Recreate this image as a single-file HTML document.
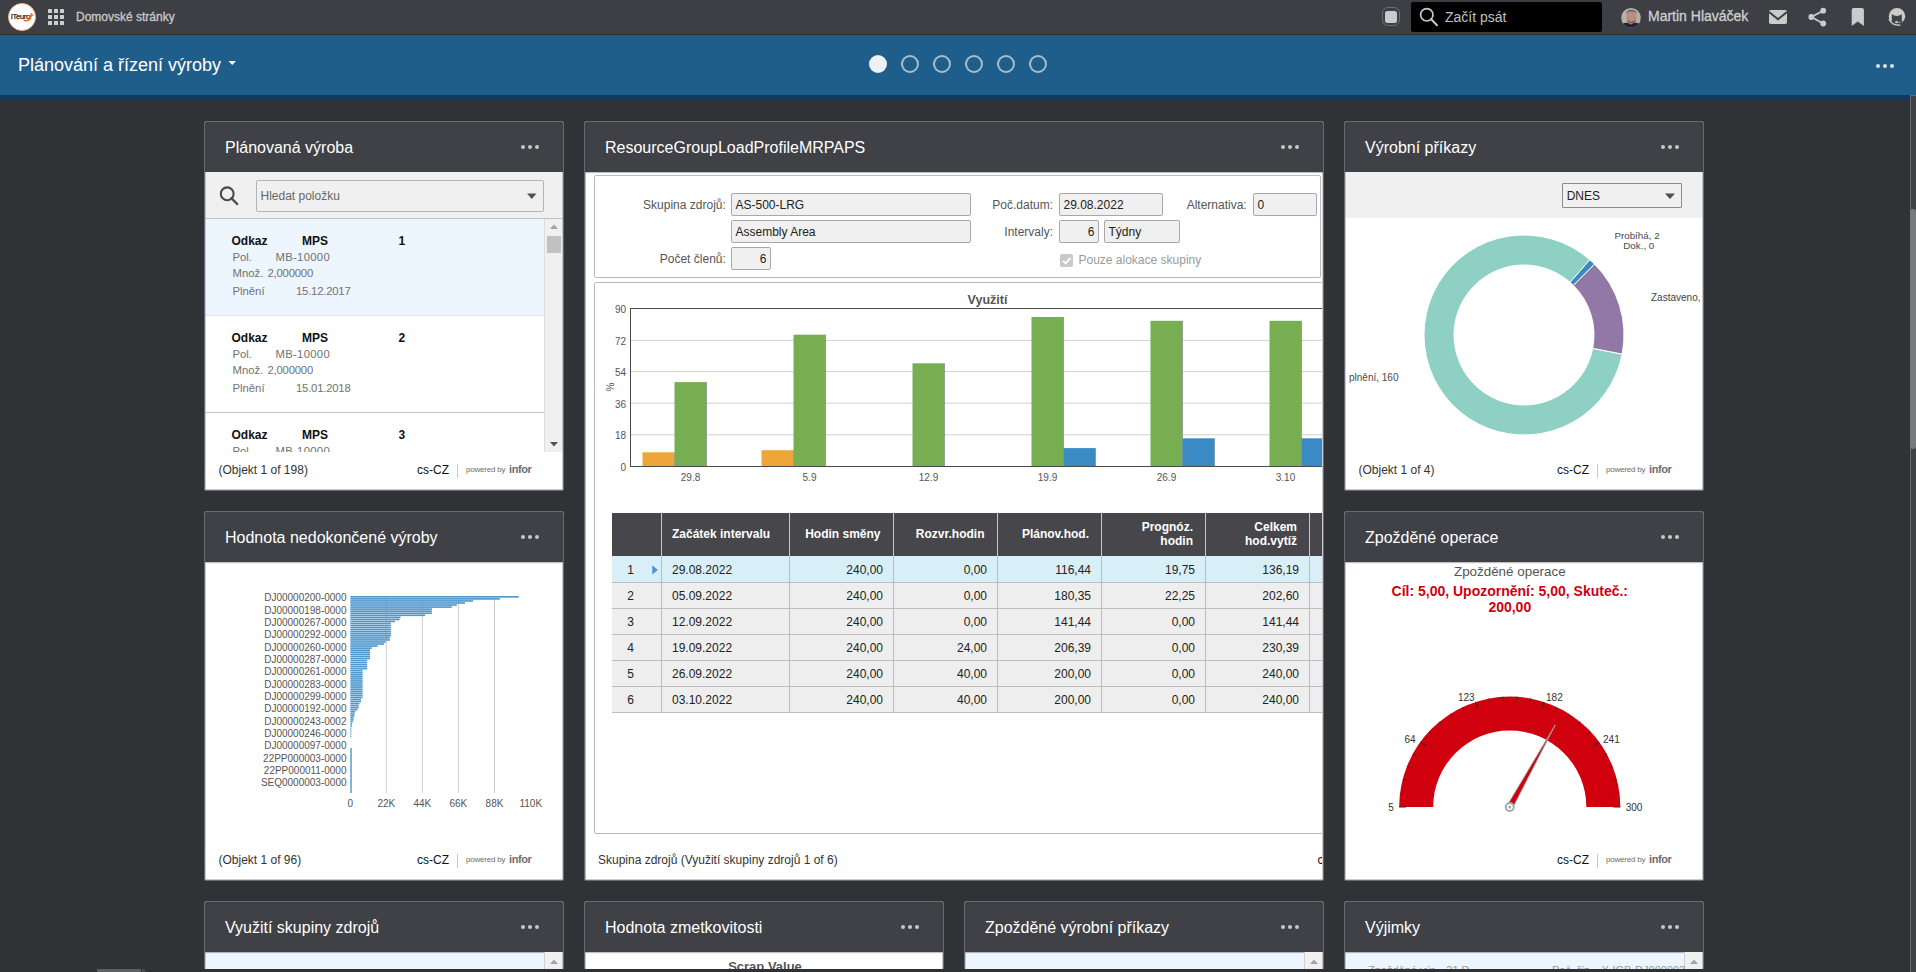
<!DOCTYPE html>
<html><head><meta charset="utf-8"><title>Plánování a řízení výroby</title>
<style>
html,body{margin:0;padding:0;}
body{width:1916px;height:972px;overflow:hidden;position:relative;background:#313236;font-family:"Liberation Sans",sans-serif;}
.a{position:absolute;}
.t{white-space:nowrap;}
svg{position:absolute;overflow:visible;}
</style></head><body>

<div class="a" style="left:0px;top:0px;width:1916px;height:34px;background:#3e3f44;"></div>
<div class="a" style="left:0px;top:34px;width:1916px;height:1px;background:#2e2f33;"></div>
<div class="a" style="left:8px;top:3px;width:26px;height:26px;border-radius:50%;background:#fff;border:1px solid #f4b48c;"></div>
<div class="a t" style="left:10.80px;top:12.87px;width:1000px;font-size:7.6px;line-height:7.6px;color:#2a2a2a;letter-spacing:-0.35px;-webkit-text-stroke:0.25px #2a2a2a;">ITeuro</div>
<svg style="left:0;top:0" width="40" height="35"><path d="M24.2 20.6 Q30 21.5 31.3 16" stroke="#f26a2a" stroke-width="1.4" fill="none" stroke-linecap="round"/><path d="M29.4 16.2 L33.4 16 L31.6 12.6 Z" fill="#f26a2a"/></svg>
<div class="a" style="left:48px;top:9px;width:4px;height:4px;background:#cfcfcf;border-radius:0.5px;"></div>
<div class="a" style="left:48px;top:15px;width:4px;height:4px;background:#cfcfcf;border-radius:0.5px;"></div>
<div class="a" style="left:48px;top:21px;width:4px;height:4px;background:#cfcfcf;border-radius:0.5px;"></div>
<div class="a" style="left:54px;top:9px;width:4px;height:4px;background:#cfcfcf;border-radius:0.5px;"></div>
<div class="a" style="left:54px;top:15px;width:4px;height:4px;background:#cfcfcf;border-radius:0.5px;"></div>
<div class="a" style="left:54px;top:21px;width:4px;height:4px;background:#cfcfcf;border-radius:0.5px;"></div>
<div class="a" style="left:60px;top:9px;width:4px;height:4px;background:#cfcfcf;border-radius:0.5px;"></div>
<div class="a" style="left:60px;top:15px;width:4px;height:4px;background:#cfcfcf;border-radius:0.5px;"></div>
<div class="a" style="left:60px;top:21px;width:4px;height:4px;background:#cfcfcf;border-radius:0.5px;"></div>
<div class="a t" style="left:76.00px;top:10.84px;width:1000px;font-size:12px;line-height:12px;color:#c9c9ca;-webkit-text-stroke:0.3px #c9c9ca;">Domovské stránky</div>
<div class="a" style="left:1382px;top:7px;width:16px;height:16.5px;border:1.5px solid #6d6d72;border-radius:6px;"></div>
<div class="a" style="left:1385px;top:11px;width:12.3px;height:12.3px;background:#cbcbcb;border-radius:2.5px;"></div>
<div class="a" style="left:1411px;top:2px;width:191px;height:30px;background:#000;border-radius:2px;"></div>
<svg style="left:1419px;top:7px" width="20" height="21"><circle cx="7.8" cy="7.8" r="6.2" stroke="#c8c8c8" stroke-width="1.7" fill="none"/><line x1="12.2" y1="12.2" x2="18" y2="18.2" stroke="#c8c8c8" stroke-width="2" stroke-linecap="round"/></svg>
<div class="a t" style="left:1445.00px;top:10.15px;width:1000px;font-size:14px;line-height:14px;color:#c0c0c0;">Začít psát</div>
<svg style="left:1621px;top:8px" width="20" height="20"><defs><clipPath id="av"><circle cx="10" cy="9.8" r="9.8"/></clipPath></defs><g clip-path="url(#av)"><rect x="0" y="0" width="20" height="20" fill="#b5b0aa"/><ellipse cx="10.5" cy="9" rx="5.2" ry="6.6" fill="#b98f7c"/><path d="M5 6 Q6 1.5 10.5 1.8 Q15 1.8 16 6 Q14 3.5 10.5 3.6 Q7 3.5 5 6 Z" fill="#6d6866"/><path d="M6.5 11.5 Q10.5 16 14.5 11.5 L14.5 14 Q10.5 17 6.5 14 Z" fill="#6b5048" opacity="0.8"/><path d="M0 20 L1.5 16 Q6 13.5 10 16.5 Q14 13.5 18.5 16 L20 20 Z" fill="#1f2430"/></g></svg>
<div class="a t" style="left:1648.00px;top:9.15px;width:1000px;font-size:14px;line-height:14px;color:#cfcfd0;-webkit-text-stroke:0.3px #cfcfd0;">Martin Hlaváček</div>
<svg style="left:1768px;top:9px" width="20" height="16"><rect x="1" y="1" width="18" height="14" rx="1.8" fill="#cbcbcb"/><path d="M1 3 L10 10.2 L19 3" stroke="#3e3f44" stroke-width="2" fill="none"/></svg>
<svg style="left:1807px;top:7px" width="22" height="20"><circle cx="16.2" cy="3.7" r="2.9" fill="#cbcbcb"/><circle cx="4.3" cy="10" r="2.9" fill="#cbcbcb"/><circle cx="16.2" cy="16.5" r="2.9" fill="#cbcbcb"/><path d="M16.2 3.7 L4.3 10 L16.2 16.5" stroke="#cbcbcb" stroke-width="1.8" fill="none"/></svg>
<svg style="left:1851px;top:8px" width="14" height="19"><path d="M0.7 2 Q0.7 0.1 2.6 0.1 H11 Q12.9 0.1 12.9 2 V18 L6.8 13.5 L0.7 18 Z" fill="#cbcbcb"/></svg>
<svg style="left:1880px;top:2px" width="32" height="30"><circle cx="17" cy="14.2" r="8.2" fill="#cbcbcb"/><path d="M11.8 12.2 Q16.8 15.8 21.8 12.2 L21.8 19.5 L25.5 19.5 L25.5 24 L8.5 24 L8.5 19.5 L11.8 19.5 Z" fill="#404146"/><path d="M9.3 17.5 Q11.5 23.2 19.8 23.3" stroke="#cbcbcb" stroke-width="1.4" fill="none" stroke-linecap="round"/><ellipse cx="16.6" cy="20.2" rx="1.6" ry="1.1" fill="#cbcbcb"/><path d="M16.6 20.4 L21.5 20.4" stroke="#9a9a9a" stroke-width="0.9"/></svg>
<div class="a" style="left:0px;top:35px;width:1916px;height:60px;background:#1f5e8b;"></div>
<div class="a" style="left:0px;top:95px;width:1916px;height:6px;background:#153957;"></div>
<div class="a t" style="left:18.00px;top:55.76px;width:1000px;font-size:18px;line-height:18px;color:#ffffff;">Plánování a řízení výroby</div>
<svg style="left:228px;top:60px" width="9" height="6"><path d="M0.5 1 L8 1 L4.25 5 Z" fill="#fff"/></svg>
<div class="a" style="left:869px;top:55px;width:18px;height:18px;border-radius:50%;background:#eef2f5;"></div>
<div class="a" style="left:901px;top:55px;width:14px;height:14px;border-radius:50%;border:2px solid #a9bdcc;"></div>
<div class="a" style="left:933px;top:55px;width:14px;height:14px;border-radius:50%;border:2px solid #a9bdcc;"></div>
<div class="a" style="left:965px;top:55px;width:14px;height:14px;border-radius:50%;border:2px solid #a9bdcc;"></div>
<div class="a" style="left:997px;top:55px;width:14px;height:14px;border-radius:50%;border:2px solid #a9bdcc;"></div>
<div class="a" style="left:1029px;top:55px;width:14px;height:14px;border-radius:50%;border:2px solid #a9bdcc;"></div>
<div class="a" style="left:1876px;top:64px;width:4px;height:4px;background:#d8e2ea;border-radius:50%;"></div>
<div class="a" style="left:1883px;top:64px;width:4px;height:4px;background:#d8e2ea;border-radius:50%;"></div>
<div class="a" style="left:1890px;top:64px;width:4px;height:4px;background:#d8e2ea;border-radius:50%;"></div>
<div class="a" style="left:1910px;top:95px;width:6px;height:877px;background:#414045;"></div>
<div class="a" style="left:1910px;top:95px;width:1px;height:877px;background:#69696e;"></div>
<div class="a" style="left:1910px;top:95px;width:6px;height:1px;background:#69696e;"></div>
<div class="a" style="left:1910px;top:209px;width:6px;height:240px;background:#7a797e;border-radius:3px;"></div>
<div class="a" style="left:204px;top:121px;width:358px;height:368px;border:1px solid #676a73;border-radius:2px;background:#fff;overflow:hidden;">
<div class="a" style="left:0;top:0;width:358px;height:50px;background:#404146;box-shadow:0 1px 1px rgba(0,0,0,0.25);"></div>
</div>
<div class="a t" style="left:225.00px;top:140.46px;width:1000px;font-size:16px;line-height:16px;color:#ffffff;">Plánovaná výroba</div>
<div class="a" style="left:521px;top:145px;width:4px;height:4px;background:#c8c8ca;border-radius:50%;"></div>
<div class="a" style="left:528px;top:145px;width:4px;height:4px;background:#c8c8ca;border-radius:50%;"></div>
<div class="a" style="left:535px;top:145px;width:4px;height:4px;background:#c8c8ca;border-radius:50%;"></div>
<div class="a" style="left:205px;top:172px;width:358px;height:46px;background:#f0f0f0;"></div>
<div class="a" style="left:205px;top:218px;width:358px;height:1px;background:#c2c2c2;"></div>
<svg style="left:218px;top:186px" width="22" height="22"><circle cx="9.2" cy="7.8" r="6.4" stroke="#4a4a4a" stroke-width="2.1" fill="none"/><line x1="13.6" y1="12.4" x2="19.2" y2="18" stroke="#4a4a4a" stroke-width="2.3" stroke-linecap="round"/></svg>
<div class="a" style="left:256px;top:180px;width:286px;height:30px;border:1px solid #b4b4b4;border-radius:2px;background:#f0f0f0;"></div>
<div class="a t" style="left:260.50px;top:189.84px;width:1000px;font-size:12px;line-height:12px;color:#666;">Hledat položku</div>
<svg style="left:527px;top:193px" width="10" height="7"><path d="M0 0.5 L9.5 0.5 L4.75 6 Z" fill="#505050"/></svg>
<div class="a" style="left:205px;top:219px;width:340px;height:97px;background:#edf5fe;"></div>
<div class="a" style="left:205px;top:315px;width:340px;height:1px;background:#d8e3ee;"></div>
<div class="a" style="left:205px;top:412px;width:340px;height:1px;background:#c4c4c4;"></div>
<div class="a t" style="left:231.50px;top:234.84px;width:1000px;font-size:12px;line-height:12px;color:#111;font-weight:bold;">Odkaz</div>
<div class="a t" style="left:302.00px;top:234.84px;width:1000px;font-size:12px;line-height:12px;color:#111;font-weight:bold;">MPS</div>
<div class="a t" style="left:398.50px;top:234.84px;width:1000px;font-size:12px;line-height:12px;color:#111;font-weight:bold;">1</div>
<div class="a t" style="left:232.50px;top:252.43px;width:1000px;font-size:11.3px;line-height:11.3px;color:#727272;">Pol.</div>
<div class="a t" style="left:275.50px;top:252.43px;width:1000px;font-size:11.3px;line-height:11.3px;color:#727272;letter-spacing:0.3px;">MB-10000</div>
<div class="a t" style="left:232.50px;top:268.43px;width:1000px;font-size:11.3px;line-height:11.3px;color:#727272;">Množ.</div>
<div class="a t" style="left:267.50px;top:268.43px;width:1000px;font-size:11.3px;line-height:11.3px;color:#727272;letter-spacing:-0.2px;">2,000000</div>
<div class="a t" style="left:232.50px;top:286.43px;width:1000px;font-size:11.3px;line-height:11.3px;color:#727272;">Plnění</div>
<div class="a t" style="left:296.00px;top:286.43px;width:1000px;font-size:11.3px;line-height:11.3px;color:#727272;letter-spacing:-0.2px;">15.12.2017</div>
<div class="a t" style="left:231.50px;top:331.84px;width:1000px;font-size:12px;line-height:12px;color:#111;font-weight:bold;">Odkaz</div>
<div class="a t" style="left:302.00px;top:331.84px;width:1000px;font-size:12px;line-height:12px;color:#111;font-weight:bold;">MPS</div>
<div class="a t" style="left:398.50px;top:331.84px;width:1000px;font-size:12px;line-height:12px;color:#111;font-weight:bold;">2</div>
<div class="a t" style="left:232.50px;top:349.43px;width:1000px;font-size:11.3px;line-height:11.3px;color:#727272;">Pol.</div>
<div class="a t" style="left:275.50px;top:349.43px;width:1000px;font-size:11.3px;line-height:11.3px;color:#727272;letter-spacing:0.3px;">MB-10000</div>
<div class="a t" style="left:232.50px;top:365.43px;width:1000px;font-size:11.3px;line-height:11.3px;color:#727272;">Množ.</div>
<div class="a t" style="left:267.50px;top:365.43px;width:1000px;font-size:11.3px;line-height:11.3px;color:#727272;letter-spacing:-0.2px;">2,000000</div>
<div class="a t" style="left:232.50px;top:383.43px;width:1000px;font-size:11.3px;line-height:11.3px;color:#727272;">Plnění</div>
<div class="a t" style="left:296.00px;top:383.43px;width:1000px;font-size:11.3px;line-height:11.3px;color:#727272;letter-spacing:-0.2px;">15.01.2018</div>
<div class="a t" style="left:231.50px;top:428.84px;width:1000px;font-size:12px;line-height:12px;color:#111;font-weight:bold;">Odkaz</div>
<div class="a t" style="left:302.00px;top:428.84px;width:1000px;font-size:12px;line-height:12px;color:#111;font-weight:bold;">MPS</div>
<div class="a t" style="left:398.50px;top:428.84px;width:1000px;font-size:12px;line-height:12px;color:#111;font-weight:bold;">3</div>
<div class="a t" style="left:232.50px;top:446.43px;width:1000px;font-size:11.3px;line-height:11.3px;color:#727272;">Pol.</div>
<div class="a t" style="left:275.50px;top:446.43px;width:1000px;font-size:11.3px;line-height:11.3px;color:#727272;letter-spacing:0.3px;">MB-10000</div>
<div class="a" style="left:205px;top:452px;width:358px;height:37px;background:#fff;"></div>
<div class="a" style="left:545px;top:219px;width:18px;height:233px;background:#f0f0f0;"></div>
<svg style="left:545px;top:219px" width="18" height="233"><path d="M5 10 L13 10 L9 5.5 Z" fill="#a3a3a3"/><path d="M5 223 L13 223 L9 227.5 Z" fill="#505050"/></svg>
<div class="a" style="left:547px;top:236px;width:14px;height:17px;background:#c1c1c1;"></div>
<div class="a" style="left:544px;top:219px;width:1px;height:233px;background:#dcdcdc;"></div>
<div class="a t" style="left:218.50px;top:463.84px;width:1000px;font-size:12px;line-height:12px;color:#333;">(Objekt 1 of 198)</div>
<div class="a t" style="left:417.00px;top:463.84px;width:1000px;font-size:12px;line-height:12px;color:#111;">cs-CZ</div>
<div class="a" style="left:457px;top:464px;width:1px;height:14px;background:#c8c8c8;"></div>
<div class="a t" style="left:466.00px;top:466.23px;width:1000px;font-size:8px;line-height:8px;color:#6d6d6d;letter-spacing:-0.2px;">powered by</div>
<div class="a t" style="left:509.00px;top:463.69px;width:1000px;font-size:11px;line-height:11px;color:#6d6d6d;font-weight:bold;letter-spacing:-0.4px;">infor</div>
<div class="a" style="left:204px;top:511px;width:358px;height:368px;border:1px solid #676a73;border-radius:2px;background:#fff;overflow:hidden;">
<div class="a" style="left:0;top:0;width:358px;height:50px;background:#404146;box-shadow:0 1px 1px rgba(0,0,0,0.25);"></div>
</div>
<div class="a t" style="left:225.00px;top:530.46px;width:1000px;font-size:16px;line-height:16px;color:#ffffff;">Hodnota nedokončené výroby</div>
<div class="a" style="left:521px;top:535px;width:4px;height:4px;background:#c8c8ca;border-radius:50%;"></div>
<div class="a" style="left:528px;top:535px;width:4px;height:4px;background:#c8c8ca;border-radius:50%;"></div>
<div class="a" style="left:535px;top:535px;width:4px;height:4px;background:#c8c8ca;border-radius:50%;"></div>
<div class="a t" style="left:-653.50px;top:593.43px;width:1000px;font-size:10px;line-height:10px;color:#555;text-align:right;">DJ00000200-0000</div>
<div class="a t" style="left:-653.50px;top:605.75px;width:1000px;font-size:10px;line-height:10px;color:#555;text-align:right;">DJ00000198-0000</div>
<div class="a t" style="left:-653.50px;top:618.07px;width:1000px;font-size:10px;line-height:10px;color:#555;text-align:right;">DJ00000267-0000</div>
<div class="a t" style="left:-653.50px;top:630.39px;width:1000px;font-size:10px;line-height:10px;color:#555;text-align:right;">DJ00000292-0000</div>
<div class="a t" style="left:-653.50px;top:642.71px;width:1000px;font-size:10px;line-height:10px;color:#555;text-align:right;">DJ00000260-0000</div>
<div class="a t" style="left:-653.50px;top:655.03px;width:1000px;font-size:10px;line-height:10px;color:#555;text-align:right;">DJ00000287-0000</div>
<div class="a t" style="left:-653.50px;top:667.35px;width:1000px;font-size:10px;line-height:10px;color:#555;text-align:right;">DJ00000261-0000</div>
<div class="a t" style="left:-653.50px;top:679.67px;width:1000px;font-size:10px;line-height:10px;color:#555;text-align:right;">DJ00000283-0000</div>
<div class="a t" style="left:-653.50px;top:692.00px;width:1000px;font-size:10px;line-height:10px;color:#555;text-align:right;">DJ00000299-0000</div>
<div class="a t" style="left:-653.50px;top:704.31px;width:1000px;font-size:10px;line-height:10px;color:#555;text-align:right;">DJ00000192-0000</div>
<div class="a t" style="left:-653.50px;top:716.63px;width:1000px;font-size:10px;line-height:10px;color:#555;text-align:right;">DJ00000243-0002</div>
<div class="a t" style="left:-653.50px;top:728.95px;width:1000px;font-size:10px;line-height:10px;color:#555;text-align:right;">DJ00000246-0000</div>
<div class="a t" style="left:-653.50px;top:741.27px;width:1000px;font-size:10px;line-height:10px;color:#555;text-align:right;">DJ00000097-0000</div>
<div class="a t" style="left:-653.50px;top:753.59px;width:1000px;font-size:10px;line-height:10px;color:#555;text-align:right;">22PP000003-0000</div>
<div class="a t" style="left:-653.50px;top:765.91px;width:1000px;font-size:10px;line-height:10px;color:#555;text-align:right;">22PP000011-0000</div>
<div class="a t" style="left:-653.50px;top:778.24px;width:1000px;font-size:10px;line-height:10px;color:#555;text-align:right;">SEQ0000003-0000</div>
<svg style="left:0;top:0" width="600" height="972"><line x1="386.3" y1="596" x2="386.3" y2="793" stroke="#cfcfcf" stroke-width="1"/><line x1="422.4" y1="596" x2="422.4" y2="793" stroke="#cfcfcf" stroke-width="1"/><line x1="458.4" y1="596" x2="458.4" y2="793" stroke="#cfcfcf" stroke-width="1"/><line x1="494.5" y1="596" x2="494.5" y2="793" stroke="#cfcfcf" stroke-width="1"/><rect x="350.4" y="596.00" width="168.40" height="1.64" fill="#4f97cd"/><rect x="350.4" y="598.05" width="149.50" height="1.64" fill="#4f97cd"/><rect x="350.4" y="600.10" width="122.60" height="1.64" fill="#4f97cd"/><rect x="350.4" y="602.16" width="114.60" height="1.64" fill="#4f97cd"/><rect x="350.4" y="604.21" width="106.40" height="1.64" fill="#4f97cd"/><rect x="350.4" y="606.26" width="101.40" height="1.64" fill="#4f97cd"/><rect x="350.4" y="608.31" width="81.50" height="1.64" fill="#4f97cd"/><rect x="350.4" y="610.36" width="81.50" height="1.64" fill="#4f97cd"/><rect x="350.4" y="612.42" width="81.50" height="1.64" fill="#4f97cd"/><rect x="350.4" y="614.47" width="74.70" height="1.64" fill="#4f97cd"/><rect x="350.4" y="616.52" width="50.10" height="1.64" fill="#4f97cd"/><rect x="350.4" y="618.57" width="49.20" height="1.64" fill="#4f97cd"/><rect x="350.4" y="620.62" width="44.50" height="1.64" fill="#4f97cd"/><rect x="350.4" y="622.68" width="40.50" height="1.64" fill="#4f97cd"/><rect x="350.4" y="624.73" width="40.50" height="1.64" fill="#4f97cd"/><rect x="350.4" y="626.78" width="40.50" height="1.64" fill="#4f97cd"/><rect x="350.4" y="628.83" width="40.50" height="1.64" fill="#4f97cd"/><rect x="350.4" y="630.89" width="40.50" height="1.64" fill="#4f97cd"/><rect x="350.4" y="632.94" width="40.50" height="1.64" fill="#4f97cd"/><rect x="350.4" y="634.99" width="40.50" height="1.64" fill="#4f97cd"/><rect x="350.4" y="637.04" width="39.40" height="1.64" fill="#4f97cd"/><rect x="350.4" y="639.09" width="39.40" height="1.64" fill="#4f97cd"/><rect x="350.4" y="641.15" width="35.40" height="1.64" fill="#4f97cd"/><rect x="350.4" y="643.20" width="33.70" height="1.64" fill="#4f97cd"/><rect x="350.4" y="645.25" width="27.20" height="1.64" fill="#4f97cd"/><rect x="350.4" y="647.30" width="21.30" height="1.64" fill="#4f97cd"/><rect x="350.4" y="649.35" width="19.60" height="1.64" fill="#4f97cd"/><rect x="350.4" y="651.41" width="19.60" height="1.64" fill="#4f97cd"/><rect x="350.4" y="653.46" width="19.60" height="1.64" fill="#4f97cd"/><rect x="350.4" y="655.51" width="19.60" height="1.64" fill="#4f97cd"/><rect x="350.4" y="657.56" width="19.60" height="1.64" fill="#4f97cd"/><rect x="350.4" y="659.61" width="16.80" height="1.64" fill="#4f97cd"/><rect x="350.4" y="661.67" width="16.80" height="1.64" fill="#4f97cd"/><rect x="350.4" y="663.72" width="16.80" height="1.64" fill="#4f97cd"/><rect x="350.4" y="665.77" width="16.80" height="1.64" fill="#4f97cd"/><rect x="350.4" y="667.82" width="16.80" height="1.64" fill="#4f97cd"/><rect x="350.4" y="669.88" width="12.20" height="1.64" fill="#4f97cd"/><rect x="350.4" y="671.93" width="12.20" height="1.64" fill="#4f97cd"/><rect x="350.4" y="673.98" width="12.20" height="1.64" fill="#4f97cd"/><rect x="350.4" y="676.03" width="12.20" height="1.64" fill="#4f97cd"/><rect x="350.4" y="678.08" width="12.20" height="1.64" fill="#4f97cd"/><rect x="350.4" y="680.14" width="12.20" height="1.64" fill="#4f97cd"/><rect x="350.4" y="682.19" width="12.20" height="1.64" fill="#4f97cd"/><rect x="350.4" y="684.24" width="12.20" height="1.64" fill="#4f97cd"/><rect x="350.4" y="686.29" width="12.20" height="1.64" fill="#4f97cd"/><rect x="350.4" y="688.34" width="12.20" height="1.64" fill="#4f97cd"/><rect x="350.4" y="690.40" width="12.20" height="1.64" fill="#4f97cd"/><rect x="350.4" y="692.45" width="12.20" height="1.64" fill="#4f97cd"/><rect x="350.4" y="694.50" width="12.20" height="1.64" fill="#4f97cd"/><rect x="350.4" y="696.55" width="12.20" height="1.64" fill="#4f97cd"/><rect x="350.4" y="698.60" width="10.60" height="1.64" fill="#4f97cd"/><rect x="350.4" y="700.66" width="10.60" height="1.64" fill="#4f97cd"/><rect x="350.4" y="702.71" width="9.10" height="1.64" fill="#4f97cd"/><rect x="350.4" y="704.76" width="8.30" height="1.64" fill="#4f97cd"/><rect x="350.4" y="706.81" width="8.30" height="1.64" fill="#4f97cd"/><rect x="350.4" y="708.86" width="7.10" height="1.64" fill="#4f97cd"/><rect x="350.4" y="710.92" width="4.90" height="1.64" fill="#4f97cd"/><rect x="350.4" y="712.97" width="4.10" height="1.64" fill="#4f97cd"/><rect x="350.4" y="715.02" width="4.10" height="1.64" fill="#4f97cd"/><rect x="350.4" y="717.07" width="3.20" height="1.64" fill="#4f97cd"/><rect x="350.4" y="719.12" width="3.20" height="1.64" fill="#4f97cd"/><rect x="350.4" y="721.18" width="2.30" height="1.64" fill="#4f97cd"/><rect x="350.4" y="723.23" width="1.50" height="1.64" fill="#4f97cd"/><rect x="350.4" y="725.28" width="1.50" height="1.64" fill="#4f97cd"/><rect x="350.4" y="727.33" width="0.90" height="1.64" fill="#4f97cd"/><rect x="350.4" y="729.39" width="0.90" height="1.64" fill="#4f97cd"/><rect x="350.4" y="731.44" width="0.90" height="1.64" fill="#4f97cd"/><rect x="350.4" y="733.49" width="0.90" height="1.64" fill="#4f97cd"/><rect x="350.4" y="735.54" width="0.90" height="1.64" fill="#4f97cd"/><rect x="350.3" y="748" width="1.5" height="45" fill="#5a9dd0"/></svg>
<div class="a t" style="left:-149.70px;top:798.83px;width:1000px;font-size:10px;line-height:10px;color:#555;text-align:center;">0</div>
<div class="a t" style="left:-113.70px;top:798.83px;width:1000px;font-size:10px;line-height:10px;color:#555;text-align:center;">22K</div>
<div class="a t" style="left:-77.60px;top:798.83px;width:1000px;font-size:10px;line-height:10px;color:#555;text-align:center;">44K</div>
<div class="a t" style="left:-41.60px;top:798.83px;width:1000px;font-size:10px;line-height:10px;color:#555;text-align:center;">66K</div>
<div class="a t" style="left:-5.50px;top:798.83px;width:1000px;font-size:10px;line-height:10px;color:#555;text-align:center;">88K</div>
<div class="a t" style="left:30.80px;top:798.83px;width:1000px;font-size:10px;line-height:10px;color:#555;text-align:center;">110K</div>
<div class="a t" style="left:218.50px;top:853.84px;width:1000px;font-size:12px;line-height:12px;color:#333;">(Objekt 1 of 96)</div>
<div class="a t" style="left:417.00px;top:853.84px;width:1000px;font-size:12px;line-height:12px;color:#111;">cs-CZ</div>
<div class="a" style="left:457px;top:854px;width:1px;height:14px;background:#c8c8c8;"></div>
<div class="a t" style="left:466.00px;top:856.23px;width:1000px;font-size:8px;line-height:8px;color:#6d6d6d;letter-spacing:-0.2px;">powered by</div>
<div class="a t" style="left:509.00px;top:853.69px;width:1000px;font-size:11px;line-height:11px;color:#6d6d6d;font-weight:bold;letter-spacing:-0.4px;">infor</div>
<div class="a" style="left:584px;top:121px;width:738px;height:758px;border:1px solid #676a73;border-radius:2px;background:#fff;overflow:hidden;">
<div class="a" style="left:0;top:0;width:738px;height:50px;background:#404146;box-shadow:0 1px 1px rgba(0,0,0,0.25);"></div>
</div>
<div class="a t" style="left:605.00px;top:140.46px;width:1000px;font-size:16px;line-height:16px;color:#ffffff;">ResourceGroupLoadProfileMRPAPS</div>
<div class="a" style="left:1281px;top:145px;width:4px;height:4px;background:#c8c8ca;border-radius:50%;"></div>
<div class="a" style="left:1288px;top:145px;width:4px;height:4px;background:#c8c8ca;border-radius:50%;"></div>
<div class="a" style="left:1295px;top:145px;width:4px;height:4px;background:#c8c8ca;border-radius:50%;"></div>
<div class="a" style="left:585px;top:172px;width:1px;height:708px;background:#c4c4c8;"></div>
<div class="a" style="left:594px;top:175px;width:725px;height:101px;border:1px solid #b9b9bd;border-radius:2px;"></div>
<div class="a t" style="left:-274.20px;top:198.84px;width:1000px;font-size:12px;line-height:12px;color:#555;text-align:right;">Skupina zdrojů:</div>
<div class="a" style="left:731px;top:193px;width:238px;height:21px;border:1px solid #a8a8ac;border-radius:2px;background:#f0f0f0;"></div>
<div class="a t" style="left:735.50px;top:198.84px;width:1000px;font-size:12px;line-height:12px;color:#222;">AS-500-LRG</div>
<div class="a" style="left:731px;top:220px;width:238px;height:21px;border:1px solid #a8a8ac;border-radius:2px;background:#f0f0f0;"></div>
<div class="a t" style="left:735.50px;top:225.84px;width:1000px;font-size:12px;line-height:12px;color:#222;">Assembly Area</div>
<div class="a t" style="left:-274.20px;top:252.84px;width:1000px;font-size:12px;line-height:12px;color:#555;text-align:right;">Počet členů:</div>
<div class="a" style="left:731px;top:247px;width:38px;height:21px;border:1px solid #a8a8ac;border-radius:2px;background:#f0f0f0;"></div>
<div class="a t" style="left:-233.50px;top:252.84px;width:1000px;font-size:12px;line-height:12px;color:#222;text-align:right;">6</div>
<div class="a t" style="left:53.00px;top:198.84px;width:1000px;font-size:12px;line-height:12px;color:#555;text-align:right;">Poč.datum:</div>
<div class="a" style="left:1059px;top:193px;width:102px;height:21px;border:1px solid #a8a8ac;border-radius:2px;background:#f0f0f0;"></div>
<div class="a t" style="left:1063.50px;top:198.84px;width:1000px;font-size:12px;line-height:12px;color:#222;">29.08.2022</div>
<div class="a t" style="left:246.70px;top:198.84px;width:1000px;font-size:12px;line-height:12px;color:#555;text-align:right;">Alternativa:</div>
<div class="a" style="left:1253px;top:193px;width:62px;height:21px;border:1px solid #a8a8ac;border-radius:2px;background:#f0f0f0;"></div>
<div class="a t" style="left:1257.50px;top:198.84px;width:1000px;font-size:12px;line-height:12px;color:#222;">0</div>
<div class="a t" style="left:53.00px;top:225.84px;width:1000px;font-size:12px;line-height:12px;color:#555;text-align:right;">Intervaly:</div>
<div class="a" style="left:1059px;top:220px;width:38px;height:21px;border:1px solid #a8a8ac;border-radius:2px;background:#f0f0f0;"></div>
<div class="a t" style="left:94.50px;top:225.84px;width:1000px;font-size:12px;line-height:12px;color:#222;text-align:right;">6</div>
<div class="a" style="left:1104px;top:220px;width:74px;height:21px;border:1px solid #a8a8ac;border-radius:2px;background:#f0f0f0;"></div>
<div class="a t" style="left:1108.50px;top:225.84px;width:1000px;font-size:12px;line-height:12px;color:#222;">Týdny</div>
<svg style="left:1060px;top:254px" width="14" height="14"><rect x="0" y="0" width="13" height="13" rx="2" fill="#c9c9c9"/><path d="M3 6.8 L5.6 9.4 L10.4 3.8" stroke="#fff" stroke-width="1.8" fill="none"/></svg>
<div class="a t" style="left:1078.50px;top:254.14px;width:1000px;font-size:12px;line-height:12px;color:#9a9a9a;">Pouze alokace skupiny</div>
<div class="a" style="left:0;top:0;width:1322px;height:972px;overflow:hidden;">
<div class="a" style="left:594px;top:282px;width:740px;height:550px;border:1px solid #b9b9bd;border-radius:2px;"></div>
<div class="a t" style="left:487.50px;top:294.22px;width:1000px;font-size:12.5px;line-height:12.5px;color:#555;font-weight:bold;text-align:center;">Využití</div>
<svg style="left:0;top:0" width="1330" height="972"><line x1="630" y1="340.4" x2="1322" y2="340.4" stroke="#d0d0d0" stroke-width="1"/><line x1="630" y1="371.6" x2="1322" y2="371.6" stroke="#d0d0d0" stroke-width="1"/><line x1="630" y1="403.2" x2="1322" y2="403.2" stroke="#d0d0d0" stroke-width="1"/><line x1="630" y1="434.8" x2="1322" y2="434.8" stroke="#d0d0d0" stroke-width="1"/><line x1="630" y1="308.5" x2="1322" y2="308.5" stroke="#4a4a4a" stroke-width="1"/><line x1="630.5" y1="308" x2="630.5" y2="467" stroke="#4a4a4a" stroke-width="1"/><line x1="630" y1="466.5" x2="1322" y2="466.5" stroke="#4a4a4a" stroke-width="1"/><rect x="642.5" y="452.3" width="32" height="13.7" fill="#eea63a"/><rect x="674.1" y="452.3" width="0.9" height="13.7" fill="rgba(90,90,110,0.45)"/><rect x="674.5" y="382.1" width="32" height="83.9" fill="#78ae52"/><rect x="706.1" y="382.1" width="0.9" height="83.9" fill="rgba(90,90,110,0.45)"/><rect x="761.5" y="450.2" width="32" height="15.8" fill="#eea63a"/><rect x="793.1" y="450.2" width="0.9" height="15.8" fill="rgba(90,90,110,0.45)"/><rect x="793.5" y="334.7" width="32" height="131.3" fill="#78ae52"/><rect x="825.1" y="334.7" width="0.9" height="131.3" fill="rgba(90,90,110,0.45)"/><rect x="912.5" y="363.3" width="32" height="102.7" fill="#78ae52"/><rect x="944.1" y="363.3" width="0.9" height="102.7" fill="rgba(90,90,110,0.45)"/><rect x="1031.5" y="317.0" width="32" height="149.0" fill="#78ae52"/><rect x="1063.1" y="317.0" width="0.9" height="149.0" fill="rgba(90,90,110,0.45)"/><rect x="1063.5" y="448.1" width="32" height="17.9" fill="#3a8bc5"/><rect x="1095.1" y="448.1" width="0.9" height="17.9" fill="rgba(90,90,110,0.45)"/><rect x="1150.5" y="320.8" width="32" height="145.2" fill="#78ae52"/><rect x="1182.1" y="320.8" width="0.9" height="145.2" fill="rgba(90,90,110,0.45)"/><rect x="1182.5" y="438.3" width="32" height="27.7" fill="#3a8bc5"/><rect x="1214.1" y="438.3" width="0.9" height="27.7" fill="rgba(90,90,110,0.45)"/><rect x="1269.5" y="320.8" width="32" height="145.2" fill="#78ae52"/><rect x="1301.1" y="320.8" width="0.9" height="145.2" fill="rgba(90,90,110,0.45)"/><rect x="1301.5" y="438.3" width="32" height="27.7" fill="#3a8bc5"/><rect x="1333.1" y="438.3" width="0.9" height="27.7" fill="rgba(90,90,110,0.45)"/></svg>
<div class="a t" style="left:-374.00px;top:304.84px;width:1000px;font-size:10px;line-height:10px;color:#555;text-align:right;">90</div>
<div class="a t" style="left:-374.00px;top:336.94px;width:1000px;font-size:10px;line-height:10px;color:#555;text-align:right;">72</div>
<div class="a t" style="left:-374.00px;top:368.14px;width:1000px;font-size:10px;line-height:10px;color:#555;text-align:right;">54</div>
<div class="a t" style="left:-374.00px;top:399.74px;width:1000px;font-size:10px;line-height:10px;color:#555;text-align:right;">36</div>
<div class="a t" style="left:-374.00px;top:431.34px;width:1000px;font-size:10px;line-height:10px;color:#555;text-align:right;">18</div>
<div class="a t" style="left:-374.00px;top:462.74px;width:1000px;font-size:10px;line-height:10px;color:#555;text-align:right;">0</div>
<div class="a t" style="left:606.5px;top:382px;font-size:10px;line-height:10px;color:#555;transform:rotate(-90deg);transform-origin:50% 50%;">%</div>
<div class="a t" style="left:190.50px;top:473.04px;width:1000px;font-size:10px;line-height:10px;color:#555;text-align:center;">29.8</div>
<div class="a t" style="left:309.50px;top:473.04px;width:1000px;font-size:10px;line-height:10px;color:#555;text-align:center;">5.9</div>
<div class="a t" style="left:428.50px;top:473.04px;width:1000px;font-size:10px;line-height:10px;color:#555;text-align:center;">12.9</div>
<div class="a t" style="left:547.50px;top:473.04px;width:1000px;font-size:10px;line-height:10px;color:#555;text-align:center;">19.9</div>
<div class="a t" style="left:666.50px;top:473.04px;width:1000px;font-size:10px;line-height:10px;color:#555;text-align:center;">26.9</div>
<div class="a t" style="left:785.50px;top:473.04px;width:1000px;font-size:10px;line-height:10px;color:#555;text-align:center;">3.10</div>
<div class="a" style="left:612px;top:513px;width:710px;height:43px;background:#47464b;"></div>
<div class="a" style="left:612px;top:556px;width:710px;height:26px;background:#d9eff7;"></div>
<div class="a" style="left:612px;top:582px;width:710px;height:130px;background:#eeeeee;"></div>
<svg style="left:0;top:0" width="1330" height="972"><line x1="661.5" y1="513" x2="661.5" y2="556" stroke="#c8c8cc" stroke-width="1"/><line x1="661.5" y1="556" x2="661.5" y2="713" stroke="#bdbdbd" stroke-width="1"/><line x1="789.5" y1="513" x2="789.5" y2="556" stroke="#c8c8cc" stroke-width="1"/><line x1="789.5" y1="556" x2="789.5" y2="713" stroke="#bdbdbd" stroke-width="1"/><line x1="893.5" y1="513" x2="893.5" y2="556" stroke="#c8c8cc" stroke-width="1"/><line x1="893.5" y1="556" x2="893.5" y2="713" stroke="#bdbdbd" stroke-width="1"/><line x1="997.5" y1="513" x2="997.5" y2="556" stroke="#c8c8cc" stroke-width="1"/><line x1="997.5" y1="556" x2="997.5" y2="713" stroke="#bdbdbd" stroke-width="1"/><line x1="1101.5" y1="513" x2="1101.5" y2="556" stroke="#c8c8cc" stroke-width="1"/><line x1="1101.5" y1="556" x2="1101.5" y2="713" stroke="#bdbdbd" stroke-width="1"/><line x1="1205.5" y1="513" x2="1205.5" y2="556" stroke="#c8c8cc" stroke-width="1"/><line x1="1205.5" y1="556" x2="1205.5" y2="713" stroke="#bdbdbd" stroke-width="1"/><line x1="1309.5" y1="513" x2="1309.5" y2="556" stroke="#c8c8cc" stroke-width="1"/><line x1="1309.5" y1="556" x2="1309.5" y2="713" stroke="#bdbdbd" stroke-width="1"/><line x1="612" y1="582.5" x2="1322" y2="582.5" stroke="#bdbdbd" stroke-width="1"/><line x1="612" y1="608.5" x2="1322" y2="608.5" stroke="#bdbdbd" stroke-width="1"/><line x1="612" y1="634.5" x2="1322" y2="634.5" stroke="#bdbdbd" stroke-width="1"/><line x1="612" y1="660.5" x2="1322" y2="660.5" stroke="#bdbdbd" stroke-width="1"/><line x1="612" y1="686.5" x2="1322" y2="686.5" stroke="#bdbdbd" stroke-width="1"/><line x1="612" y1="712.5" x2="1322" y2="712.5" stroke="#bdbdbd" stroke-width="1"/></svg>
<div class="a t" style="left:672.00px;top:528.34px;width:1000px;font-size:12px;line-height:12px;color:#fff;font-weight:bold;">Začátek intervalu</div>
<div class="a t" style="left:-119.50px;top:528.34px;width:1000px;font-size:12px;line-height:12px;color:#fff;font-weight:bold;text-align:right;">Hodin směny</div>
<div class="a t" style="left:-15.50px;top:528.34px;width:1000px;font-size:12px;line-height:12px;color:#fff;font-weight:bold;text-align:right;">Rozvr.hodin</div>
<div class="a t" style="left:89.00px;top:528.34px;width:1000px;font-size:12px;line-height:12px;color:#fff;font-weight:bold;text-align:right;">Plánov.hod.</div>
<div class="a t" style="left:193.00px;top:521.34px;width:1000px;font-size:12px;line-height:12px;color:#fff;font-weight:bold;text-align:right;">Prognóz.</div>
<div class="a t" style="left:193.00px;top:535.34px;width:1000px;font-size:12px;line-height:12px;color:#fff;font-weight:bold;text-align:right;">hodin</div>
<div class="a t" style="left:297.00px;top:521.34px;width:1000px;font-size:12px;line-height:12px;color:#fff;font-weight:bold;text-align:right;">Celkem</div>
<div class="a t" style="left:297.00px;top:535.34px;width:1000px;font-size:12px;line-height:12px;color:#fff;font-weight:bold;text-align:right;">hod.vytíž</div>
<div class="a t" style="left:130.50px;top:563.84px;width:1000px;font-size:12px;line-height:12px;color:#222;text-align:center;">1</div>
<div class="a t" style="left:672.00px;top:563.84px;width:1000px;font-size:12px;line-height:12px;color:#222;">29.08.2022</div>
<div class="a t" style="left:-117.00px;top:563.84px;width:1000px;font-size:12px;line-height:12px;color:#222;text-align:right;">240,00</div>
<div class="a t" style="left:-13.00px;top:563.84px;width:1000px;font-size:12px;line-height:12px;color:#222;text-align:right;">0,00</div>
<div class="a t" style="left:91.00px;top:563.84px;width:1000px;font-size:12px;line-height:12px;color:#222;text-align:right;">116,44</div>
<div class="a t" style="left:195.00px;top:563.84px;width:1000px;font-size:12px;line-height:12px;color:#222;text-align:right;">19,75</div>
<div class="a t" style="left:299.00px;top:563.84px;width:1000px;font-size:12px;line-height:12px;color:#222;text-align:right;">136,19</div>
<div class="a t" style="left:130.50px;top:589.84px;width:1000px;font-size:12px;line-height:12px;color:#222;text-align:center;">2</div>
<div class="a t" style="left:672.00px;top:589.84px;width:1000px;font-size:12px;line-height:12px;color:#222;">05.09.2022</div>
<div class="a t" style="left:-117.00px;top:589.84px;width:1000px;font-size:12px;line-height:12px;color:#222;text-align:right;">240,00</div>
<div class="a t" style="left:-13.00px;top:589.84px;width:1000px;font-size:12px;line-height:12px;color:#222;text-align:right;">0,00</div>
<div class="a t" style="left:91.00px;top:589.84px;width:1000px;font-size:12px;line-height:12px;color:#222;text-align:right;">180,35</div>
<div class="a t" style="left:195.00px;top:589.84px;width:1000px;font-size:12px;line-height:12px;color:#222;text-align:right;">22,25</div>
<div class="a t" style="left:299.00px;top:589.84px;width:1000px;font-size:12px;line-height:12px;color:#222;text-align:right;">202,60</div>
<div class="a t" style="left:130.50px;top:615.84px;width:1000px;font-size:12px;line-height:12px;color:#222;text-align:center;">3</div>
<div class="a t" style="left:672.00px;top:615.84px;width:1000px;font-size:12px;line-height:12px;color:#222;">12.09.2022</div>
<div class="a t" style="left:-117.00px;top:615.84px;width:1000px;font-size:12px;line-height:12px;color:#222;text-align:right;">240,00</div>
<div class="a t" style="left:-13.00px;top:615.84px;width:1000px;font-size:12px;line-height:12px;color:#222;text-align:right;">0,00</div>
<div class="a t" style="left:91.00px;top:615.84px;width:1000px;font-size:12px;line-height:12px;color:#222;text-align:right;">141,44</div>
<div class="a t" style="left:195.00px;top:615.84px;width:1000px;font-size:12px;line-height:12px;color:#222;text-align:right;">0,00</div>
<div class="a t" style="left:299.00px;top:615.84px;width:1000px;font-size:12px;line-height:12px;color:#222;text-align:right;">141,44</div>
<div class="a t" style="left:130.50px;top:641.84px;width:1000px;font-size:12px;line-height:12px;color:#222;text-align:center;">4</div>
<div class="a t" style="left:672.00px;top:641.84px;width:1000px;font-size:12px;line-height:12px;color:#222;">19.09.2022</div>
<div class="a t" style="left:-117.00px;top:641.84px;width:1000px;font-size:12px;line-height:12px;color:#222;text-align:right;">240,00</div>
<div class="a t" style="left:-13.00px;top:641.84px;width:1000px;font-size:12px;line-height:12px;color:#222;text-align:right;">24,00</div>
<div class="a t" style="left:91.00px;top:641.84px;width:1000px;font-size:12px;line-height:12px;color:#222;text-align:right;">206,39</div>
<div class="a t" style="left:195.00px;top:641.84px;width:1000px;font-size:12px;line-height:12px;color:#222;text-align:right;">0,00</div>
<div class="a t" style="left:299.00px;top:641.84px;width:1000px;font-size:12px;line-height:12px;color:#222;text-align:right;">230,39</div>
<div class="a t" style="left:130.50px;top:667.84px;width:1000px;font-size:12px;line-height:12px;color:#222;text-align:center;">5</div>
<div class="a t" style="left:672.00px;top:667.84px;width:1000px;font-size:12px;line-height:12px;color:#222;">26.09.2022</div>
<div class="a t" style="left:-117.00px;top:667.84px;width:1000px;font-size:12px;line-height:12px;color:#222;text-align:right;">240,00</div>
<div class="a t" style="left:-13.00px;top:667.84px;width:1000px;font-size:12px;line-height:12px;color:#222;text-align:right;">40,00</div>
<div class="a t" style="left:91.00px;top:667.84px;width:1000px;font-size:12px;line-height:12px;color:#222;text-align:right;">200,00</div>
<div class="a t" style="left:195.00px;top:667.84px;width:1000px;font-size:12px;line-height:12px;color:#222;text-align:right;">0,00</div>
<div class="a t" style="left:299.00px;top:667.84px;width:1000px;font-size:12px;line-height:12px;color:#222;text-align:right;">240,00</div>
<div class="a t" style="left:130.50px;top:693.84px;width:1000px;font-size:12px;line-height:12px;color:#222;text-align:center;">6</div>
<div class="a t" style="left:672.00px;top:693.84px;width:1000px;font-size:12px;line-height:12px;color:#222;">03.10.2022</div>
<div class="a t" style="left:-117.00px;top:693.84px;width:1000px;font-size:12px;line-height:12px;color:#222;text-align:right;">240,00</div>
<div class="a t" style="left:-13.00px;top:693.84px;width:1000px;font-size:12px;line-height:12px;color:#222;text-align:right;">40,00</div>
<div class="a t" style="left:91.00px;top:693.84px;width:1000px;font-size:12px;line-height:12px;color:#222;text-align:right;">200,00</div>
<div class="a t" style="left:195.00px;top:693.84px;width:1000px;font-size:12px;line-height:12px;color:#222;text-align:right;">0,00</div>
<div class="a t" style="left:299.00px;top:693.84px;width:1000px;font-size:12px;line-height:12px;color:#222;text-align:right;">240,00</div>
</div>
<svg style="left:651.6px;top:564.5px" width="8" height="11"><path d="M0.3 0.3 L5.8 4.9 L0.3 9.6 Z" fill="#4a8fe6"/></svg>
<div class="a t" style="left:598.00px;top:853.84px;width:1000px;font-size:12px;line-height:12px;color:#333;">Skupina zdrojů (Využití skupiny zdrojů 1 of 6)</div>
<div class="a" style="left:1316px;top:850px;width:6px;height:20px;overflow:hidden;"><div class="a t" style="left:1.5px;top:3.8px;font-size:12px;line-height:12px;color:#111;">cs</div></div>
<div class="a" style="left:1344px;top:121px;width:358px;height:368px;border:1px solid #676a73;border-radius:2px;background:#fff;overflow:hidden;">
<div class="a" style="left:0;top:0;width:358px;height:50px;background:#404146;box-shadow:0 1px 1px rgba(0,0,0,0.25);"></div>
</div>
<div class="a t" style="left:1365.00px;top:140.46px;width:1000px;font-size:16px;line-height:16px;color:#ffffff;">Výrobní příkazy</div>
<div class="a" style="left:1661px;top:145px;width:4px;height:4px;background:#c8c8ca;border-radius:50%;"></div>
<div class="a" style="left:1668px;top:145px;width:4px;height:4px;background:#c8c8ca;border-radius:50%;"></div>
<div class="a" style="left:1675px;top:145px;width:4px;height:4px;background:#c8c8ca;border-radius:50%;"></div>
<div class="a" style="left:1345px;top:172px;width:358px;height:46px;background:#f0f0f0;"></div>
<div class="a" style="left:1562px;top:183px;width:118px;height:23px;border:1px solid #8c8c8c;border-radius:1px;background:#f0f0f0;"></div>
<div class="a t" style="left:1566.70px;top:189.84px;width:1000px;font-size:12px;line-height:12px;color:#222;">DNES</div>
<svg style="left:1665px;top:193px" width="11" height="7"><path d="M0 0.5 L10 0.5 L5 6 Z" fill="#505050"/></svg>
<svg style="left:0;top:0" width="1916" height="972"><path d="M1622.16 354.08 A100 100 0 1 1 1589.87 259.76 L1570.11 282.33 A70 70 0 1 0 1592.71 348.36 Z" fill="#8fd0c5" stroke="#fff" stroke-width="1"/><path d="M1589.87 259.76 A100 100 0 0 1 1594.59 264.17 L1573.41 285.42 A70 70 0 0 0 1570.11 282.33 Z" fill="#3a89c2" stroke="#fff" stroke-width="1"/><path d="M1594.59 264.17 A100 100 0 0 1 1622.16 354.08 L1592.71 348.36 A70 70 0 0 0 1573.41 285.42 Z" fill="#9178a7" stroke="#fff" stroke-width="1"/></svg>
<div class="a t" style="left:1137.00px;top:230.70px;width:1000px;font-size:9.8px;line-height:9.8px;color:#4a4a4a;text-align:center;">Probíhá, 2</div>
<div class="a t" style="left:1138.80px;top:240.70px;width:1000px;font-size:9.8px;line-height:9.8px;color:#4a4a4a;text-align:center;">Dok., 0</div>
<div class="a t" style="left:1651.00px;top:292.54px;width:1000px;font-size:10px;line-height:10px;color:#444;">Zastaveno,</div>
<div class="a" style="left:1703px;top:290px;width:1px;height:15px;background:#676a73;"></div>
<div class="a t" style="left:1349.00px;top:373.04px;width:1000px;font-size:10px;line-height:10px;color:#4a4a4a;">plnění, 160</div>
<div class="a t" style="left:1358.50px;top:463.84px;width:1000px;font-size:12px;line-height:12px;color:#333;">(Objekt 1 of 4)</div>
<div class="a t" style="left:1557.00px;top:463.84px;width:1000px;font-size:12px;line-height:12px;color:#111;">cs-CZ</div>
<div class="a" style="left:1597px;top:464px;width:1px;height:14px;background:#c8c8c8;"></div>
<div class="a t" style="left:1606.00px;top:466.23px;width:1000px;font-size:8px;line-height:8px;color:#6d6d6d;letter-spacing:-0.2px;">powered by</div>
<div class="a t" style="left:1649.00px;top:463.69px;width:1000px;font-size:11px;line-height:11px;color:#6d6d6d;font-weight:bold;letter-spacing:-0.4px;">infor</div>
<div class="a" style="left:1344px;top:511px;width:358px;height:368px;border:1px solid #676a73;border-radius:2px;background:#fff;overflow:hidden;">
<div class="a" style="left:0;top:0;width:358px;height:50px;background:#404146;box-shadow:0 1px 1px rgba(0,0,0,0.25);"></div>
</div>
<div class="a t" style="left:1365.00px;top:530.46px;width:1000px;font-size:16px;line-height:16px;color:#ffffff;">Zpožděné operace</div>
<div class="a" style="left:1661px;top:535px;width:4px;height:4px;background:#c8c8ca;border-radius:50%;"></div>
<div class="a" style="left:1668px;top:535px;width:4px;height:4px;background:#c8c8ca;border-radius:50%;"></div>
<div class="a" style="left:1675px;top:535px;width:4px;height:4px;background:#c8c8ca;border-radius:50%;"></div>
<div class="a t" style="left:1009.80px;top:564.66px;width:1000px;font-size:13.4px;line-height:13.4px;color:#555;text-align:center;">Zpožděné operace</div>
<div class="a t" style="left:1009.80px;top:583.65px;width:1000px;font-size:14px;line-height:14px;color:#d0000f;font-weight:bold;text-align:center;">Cíl: 5,00, Upozornění: 5,00, Skuteč.:</div>
<div class="a t" style="left:1009.80px;top:600.15px;width:1000px;font-size:14px;line-height:14px;color:#d0000f;font-weight:bold;text-align:center;">200,00</div>
<svg style="left:0;top:0" width="1916" height="972"><path d="M1399.15 807 A110.6 110.6 0 0 1 1620.35 807 L1586.35 807 A76.6 76.6 0 0 0 1433.15 807 Z" fill="#d0000f"/><line x1="1399.15" y1="807.00" x2="1406.15" y2="807.00" stroke="#3a2a2a" stroke-width="1.3" opacity="0.8"/><line x1="1400.02" y1="793.14" x2="1403.99" y2="793.64" stroke="#3a2a2a" stroke-width="1" opacity="0.8"/><line x1="1402.62" y1="779.49" x2="1406.50" y2="780.49" stroke="#3a2a2a" stroke-width="1" opacity="0.8"/><line x1="1406.92" y1="766.29" x2="1410.64" y2="767.76" stroke="#3a2a2a" stroke-width="1" opacity="0.8"/><line x1="1412.83" y1="753.72" x2="1416.34" y2="755.65" stroke="#3a2a2a" stroke-width="1" opacity="0.8"/><line x1="1420.27" y1="741.99" x2="1425.94" y2="746.11" stroke="#3a2a2a" stroke-width="1.3" opacity="0.8"/><line x1="1429.13" y1="731.29" x2="1432.04" y2="734.03" stroke="#3a2a2a" stroke-width="1" opacity="0.8"/><line x1="1439.25" y1="721.78" x2="1441.80" y2="724.86" stroke="#3a2a2a" stroke-width="1" opacity="0.8"/><line x1="1450.49" y1="713.62" x2="1452.63" y2="716.99" stroke="#3a2a2a" stroke-width="1" opacity="0.8"/><line x1="1462.66" y1="706.93" x2="1464.36" y2="710.55" stroke="#3a2a2a" stroke-width="1" opacity="0.8"/><line x1="1475.57" y1="701.81" x2="1477.74" y2="708.47" stroke="#3a2a2a" stroke-width="1.3" opacity="0.8"/><line x1="1489.03" y1="698.36" x2="1489.78" y2="702.29" stroke="#3a2a2a" stroke-width="1" opacity="0.8"/><line x1="1502.81" y1="696.62" x2="1503.06" y2="700.61" stroke="#3a2a2a" stroke-width="1" opacity="0.8"/><line x1="1516.69" y1="696.62" x2="1516.44" y2="700.61" stroke="#3a2a2a" stroke-width="1" opacity="0.8"/><line x1="1530.47" y1="698.36" x2="1529.72" y2="702.29" stroke="#3a2a2a" stroke-width="1" opacity="0.8"/><line x1="1543.93" y1="701.81" x2="1541.76" y2="708.47" stroke="#3a2a2a" stroke-width="1.3" opacity="0.8"/><line x1="1556.84" y1="706.93" x2="1555.14" y2="710.55" stroke="#3a2a2a" stroke-width="1" opacity="0.8"/><line x1="1569.01" y1="713.62" x2="1566.87" y2="716.99" stroke="#3a2a2a" stroke-width="1" opacity="0.8"/><line x1="1580.25" y1="721.78" x2="1577.70" y2="724.86" stroke="#3a2a2a" stroke-width="1" opacity="0.8"/><line x1="1590.37" y1="731.29" x2="1587.46" y2="734.03" stroke="#3a2a2a" stroke-width="1" opacity="0.8"/><line x1="1599.23" y1="741.99" x2="1593.56" y2="746.11" stroke="#3a2a2a" stroke-width="1.3" opacity="0.8"/><line x1="1606.67" y1="753.72" x2="1603.16" y2="755.65" stroke="#3a2a2a" stroke-width="1" opacity="0.8"/><line x1="1612.58" y1="766.29" x2="1608.86" y2="767.76" stroke="#3a2a2a" stroke-width="1" opacity="0.8"/><line x1="1616.88" y1="779.49" x2="1613.00" y2="780.49" stroke="#3a2a2a" stroke-width="1" opacity="0.8"/><line x1="1619.48" y1="793.14" x2="1615.51" y2="793.64" stroke="#3a2a2a" stroke-width="1" opacity="0.8"/><line x1="1620.35" y1="807.00" x2="1613.35" y2="807.00" stroke="#3a2a2a" stroke-width="1.3" opacity="0.8"/><path d="M1512.37 808.45 L1555.20 725.00 L1507.13 805.55 Z" fill="#d0000f" stroke="#a0a0a0" stroke-width="1"/><circle cx="1509.75" cy="807" r="4" fill="#fff" stroke="#a8a8a8" stroke-width="2"/><circle cx="1509.75" cy="807" r="1.5" fill="#a8a8a8"/></svg>
<div class="a t" style="left:891.00px;top:802.53px;width:1000px;font-size:10px;line-height:10px;color:#333;text-align:center;">5</div>
<div class="a t" style="left:910.00px;top:734.53px;width:1000px;font-size:10px;line-height:10px;color:#333;text-align:center;">64</div>
<div class="a t" style="left:966.30px;top:692.53px;width:1000px;font-size:10px;line-height:10px;color:#333;text-align:center;">123</div>
<div class="a t" style="left:1054.40px;top:692.53px;width:1000px;font-size:10px;line-height:10px;color:#333;text-align:center;">182</div>
<div class="a t" style="left:1111.40px;top:734.53px;width:1000px;font-size:10px;line-height:10px;color:#333;text-align:center;">241</div>
<div class="a t" style="left:1134.00px;top:802.53px;width:1000px;font-size:10px;line-height:10px;color:#333;text-align:center;">300</div>
<div class="a t" style="left:1557.00px;top:853.84px;width:1000px;font-size:12px;line-height:12px;color:#111;">cs-CZ</div>
<div class="a" style="left:1597px;top:854px;width:1px;height:14px;background:#c8c8c8;"></div>
<div class="a t" style="left:1606.00px;top:856.23px;width:1000px;font-size:8px;line-height:8px;color:#6d6d6d;letter-spacing:-0.2px;">powered by</div>
<div class="a t" style="left:1649.00px;top:853.69px;width:1000px;font-size:11px;line-height:11px;color:#6d6d6d;font-weight:bold;letter-spacing:-0.4px;">infor</div>
<div class="a" style="left:204px;top:901px;width:358px;height:368px;border:1px solid #676a73;border-radius:2px;background:#edf5fe;overflow:hidden;">
<div class="a" style="left:0;top:0;width:358px;height:50px;background:#404146;box-shadow:0 1px 1px rgba(0,0,0,0.25);"></div>
</div>
<div class="a t" style="left:225.00px;top:920.46px;width:1000px;font-size:16px;line-height:16px;color:#ffffff;">Využití skupiny zdrojů</div>
<div class="a" style="left:521px;top:925px;width:4px;height:4px;background:#c8c8ca;border-radius:50%;"></div>
<div class="a" style="left:528px;top:925px;width:4px;height:4px;background:#c8c8ca;border-radius:50%;"></div>
<div class="a" style="left:535px;top:925px;width:4px;height:4px;background:#c8c8ca;border-radius:50%;"></div>
<div class="a" style="left:545px;top:952px;width:18px;height:30px;background:#f0f0f0;"></div>
<div class="a" style="left:544px;top:952px;width:1px;height:30px;background:#d0d0d0;"></div>
<svg style="left:545px;top:952px" width="18" height="20"><path d="M5 12 L13 12 L9 7.5 Z" fill="#a3a3a3"/></svg>
<div class="a" style="left:584px;top:901px;width:358px;height:368px;border:1px solid #676a73;border-radius:2px;background:#fff;overflow:hidden;">
<div class="a" style="left:0;top:0;width:358px;height:50px;background:#404146;box-shadow:0 1px 1px rgba(0,0,0,0.25);"></div>
</div>
<div class="a t" style="left:605.00px;top:920.46px;width:1000px;font-size:16px;line-height:16px;color:#ffffff;">Hodnota zmetkovitosti</div>
<div class="a" style="left:901px;top:925px;width:4px;height:4px;background:#c8c8ca;border-radius:50%;"></div>
<div class="a" style="left:908px;top:925px;width:4px;height:4px;background:#c8c8ca;border-radius:50%;"></div>
<div class="a" style="left:915px;top:925px;width:4px;height:4px;background:#c8c8ca;border-radius:50%;"></div>
<div class="a" style="left:964px;top:901px;width:358px;height:368px;border:1px solid #676a73;border-radius:2px;background:#edf5fe;overflow:hidden;">
<div class="a" style="left:0;top:0;width:358px;height:50px;background:#404146;box-shadow:0 1px 1px rgba(0,0,0,0.25);"></div>
</div>
<div class="a t" style="left:985.00px;top:920.46px;width:1000px;font-size:16px;line-height:16px;color:#ffffff;">Zpožděné výrobní příkazy</div>
<div class="a" style="left:1281px;top:925px;width:4px;height:4px;background:#c8c8ca;border-radius:50%;"></div>
<div class="a" style="left:1288px;top:925px;width:4px;height:4px;background:#c8c8ca;border-radius:50%;"></div>
<div class="a" style="left:1295px;top:925px;width:4px;height:4px;background:#c8c8ca;border-radius:50%;"></div>
<div class="a" style="left:1305px;top:952px;width:18px;height:30px;background:#f0f0f0;"></div>
<div class="a" style="left:1304px;top:952px;width:1px;height:30px;background:#d0d0d0;"></div>
<svg style="left:1305px;top:952px" width="18" height="20"><path d="M5 12 L13 12 L9 7.5 Z" fill="#a3a3a3"/></svg>
<div class="a" style="left:1344px;top:901px;width:358px;height:368px;border:1px solid #676a73;border-radius:2px;background:#edf5fe;overflow:hidden;">
<div class="a" style="left:0;top:0;width:358px;height:50px;background:#404146;box-shadow:0 1px 1px rgba(0,0,0,0.25);"></div>
</div>
<div class="a t" style="left:1365.00px;top:920.46px;width:1000px;font-size:16px;line-height:16px;color:#ffffff;">Výjimky</div>
<div class="a" style="left:1661px;top:925px;width:4px;height:4px;background:#c8c8ca;border-radius:50%;"></div>
<div class="a" style="left:1668px;top:925px;width:4px;height:4px;background:#c8c8ca;border-radius:50%;"></div>
<div class="a" style="left:1675px;top:925px;width:4px;height:4px;background:#c8c8ca;border-radius:50%;"></div>
<div class="a" style="left:1685px;top:952px;width:18px;height:30px;background:#f0f0f0;"></div>
<div class="a" style="left:1684px;top:952px;width:1px;height:30px;background:#d0d0d0;"></div>
<svg style="left:1685px;top:952px" width="18" height="20"><path d="M5 12 L13 12 L9 7.5 Z" fill="#a3a3a3"/></svg>
<div class="a t" style="left:265.00px;top:960.00px;width:1000px;font-size:13px;line-height:13px;color:#555;font-weight:bold;text-align:center;">Scrap Value</div>
<div class="a t" style="left:1368.00px;top:965.19px;width:1000px;font-size:11px;line-height:11px;color:#999;">Zpožděné výr... 21 D</div>
<div class="a t" style="left:1552.00px;top:965.19px;width:1000px;font-size:11px;line-height:11px;color:#999;">Poč. říz... X-IGB-DJ000003</div>
<div class="a" style="left:205px;top:172px;width:1px;height:318px;background:rgba(160,160,166,0.55);"></div>
<div class="a" style="left:562px;top:172px;width:1px;height:318px;background:rgba(160,160,166,0.55);"></div>
<div class="a" style="left:205px;top:489px;width:358px;height:1px;background:rgba(160,160,166,0.55);"></div>
<div class="a" style="left:205px;top:562px;width:1px;height:318px;background:rgba(160,160,166,0.55);"></div>
<div class="a" style="left:562px;top:562px;width:1px;height:318px;background:rgba(160,160,166,0.55);"></div>
<div class="a" style="left:205px;top:879px;width:358px;height:1px;background:rgba(160,160,166,0.55);"></div>
<div class="a" style="left:585px;top:172px;width:1px;height:708px;background:rgba(160,160,166,0.55);"></div>
<div class="a" style="left:1322px;top:172px;width:1px;height:708px;background:rgba(160,160,166,0.55);"></div>
<div class="a" style="left:585px;top:879px;width:738px;height:1px;background:rgba(160,160,166,0.55);"></div>
<div class="a" style="left:1345px;top:172px;width:1px;height:318px;background:rgba(160,160,166,0.55);"></div>
<div class="a" style="left:1702px;top:172px;width:1px;height:318px;background:rgba(160,160,166,0.55);"></div>
<div class="a" style="left:1345px;top:489px;width:358px;height:1px;background:rgba(160,160,166,0.55);"></div>
<div class="a" style="left:1345px;top:562px;width:1px;height:318px;background:rgba(160,160,166,0.55);"></div>
<div class="a" style="left:1702px;top:562px;width:1px;height:318px;background:rgba(160,160,166,0.55);"></div>
<div class="a" style="left:1345px;top:879px;width:358px;height:1px;background:rgba(160,160,166,0.55);"></div>
<div class="a" style="left:205px;top:952px;width:1px;height:318px;background:rgba(160,160,166,0.55);"></div>
<div class="a" style="left:562px;top:952px;width:1px;height:318px;background:rgba(160,160,166,0.55);"></div>
<div class="a" style="left:205px;top:1269px;width:358px;height:1px;background:rgba(160,160,166,0.55);"></div>
<div class="a" style="left:585px;top:952px;width:1px;height:318px;background:rgba(160,160,166,0.55);"></div>
<div class="a" style="left:942px;top:952px;width:1px;height:318px;background:rgba(160,160,166,0.55);"></div>
<div class="a" style="left:585px;top:1269px;width:358px;height:1px;background:rgba(160,160,166,0.55);"></div>
<div class="a" style="left:965px;top:952px;width:1px;height:318px;background:rgba(160,160,166,0.55);"></div>
<div class="a" style="left:1322px;top:952px;width:1px;height:318px;background:rgba(160,160,166,0.55);"></div>
<div class="a" style="left:965px;top:1269px;width:358px;height:1px;background:rgba(160,160,166,0.55);"></div>
<div class="a" style="left:1345px;top:952px;width:1px;height:318px;background:rgba(160,160,166,0.55);"></div>
<div class="a" style="left:1702px;top:952px;width:1px;height:318px;background:rgba(160,160,166,0.55);"></div>
<div class="a" style="left:1345px;top:1269px;width:358px;height:1px;background:rgba(160,160,166,0.55);"></div>
<div class="a" style="left:0px;top:969px;width:1910px;height:3px;background:#2f3034;"></div>
<div class="a" style="left:97px;top:969px;width:44px;height:3px;background:#5e5f63;"></div>
<div class="a" style="left:142px;top:969px;width:3px;height:3px;background:#4a4b4f;"></div>
</body></html>
